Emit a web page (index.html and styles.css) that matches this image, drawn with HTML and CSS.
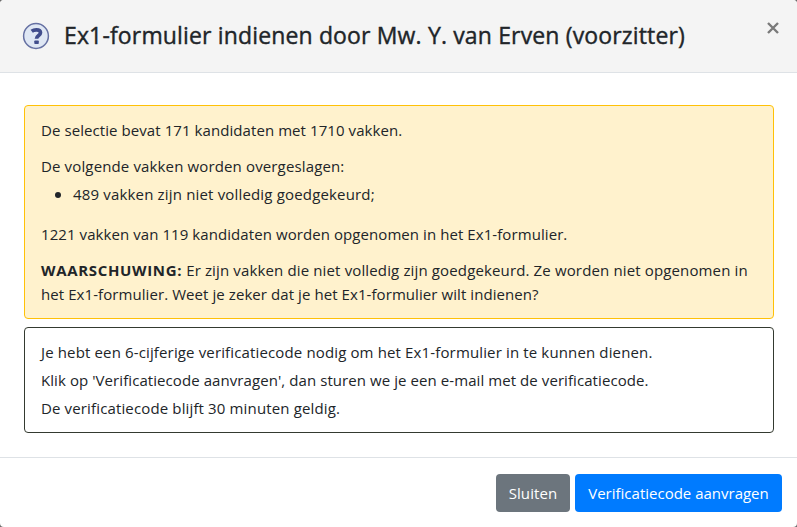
FILE: index.html
```html
<!DOCTYPE html>
<html lang="nl">
<head>
<meta charset="utf-8">
<title>Ex1-formulier indienen</title>
<link rel="stylesheet" href="styles.css">
</head>
<body>
<div class="modal" role="dialog" aria-labelledby="title">
  <header class="modal-header">
    <svg class="help-icon" viewBox="0 0 28 28" aria-hidden="true">
      <circle cx="14" cy="14" r="12.4" fill="#dfe7f4" stroke="#6570a2" stroke-width="1.5"/>
      <path d="M9.7 9.2C11 8.2 12.5 7.8 14.4 7.8c2.6 0 4.1 1.1 4.1 3 0 2.7-4 2.8-4 6" fill="none" stroke="#414d8c" stroke-width="3.7"/>
      <rect x="12.3" y="18.5" width="4.5" height="3.5" rx=".7" fill="#414d8c"/>
    </svg>
    <h1 class="modal-title" id="title">Ex1-formulier indienen door Mw. Y. van Erven (voorzitter)</h1>
    <button class="close" type="button" aria-label="Sluiten"><svg viewBox="0 0 12 12"><path d="M1 1l10 10M11 1L1 11"/></svg></button>
  </header>
  <main class="modal-body">
    <section class="notice warning">
      <p class="snug">De selectie bevat 171 kandidaten met 1710 vakken.</p>
      <p class="intro">De volgende vakken worden overgeslagen:</p>
      <ul><li>489 vakken zijn niet volledig goedgekeurd;</li></ul>
      <p class="snug">1221 vakken van 119 kandidaten worden opgenomen in het Ex1-formulier.</p>
      <p><strong>WAARSCHUWING:</strong> Er zijn vakken die niet volledig zijn goedgekeurd. Ze worden niet opgenomen in<br><span class="snug">het Ex1-formulier. Weet je zeker dat je het Ex1-formulier wilt indienen?</span></p>
    </section>
    <section class="notice info">
      <p>Je hebt een 6-cijferige verificatiecode nodig om het Ex1-formulier in te kunnen dienen.</p>
      <p class="snug">Klik op 'Verificatiecode aanvragen', dan sturen we je een e-mail met de verificatiecode.</p>
      <p>De verificatiecode blijft 30 minuten geldig.</p>
    </section>
  </main>
  <footer class="modal-footer">
    <button class="btn secondary" type="button">Sluiten</button>
    <button class="btn primary" type="button">Verificatiecode aanvragen</button>
  </footer>
</div>
</body>
</html>
```
FILE: styles.css
```css
* { box-sizing: border-box; }
body {
  margin: 0;
  background: #6b6b6b;
  color: #212529;
  font: 15px/24px "Segoe UI", "Open Sans", "Noto Sans", sans-serif;
}
.modal {
  display: flex;
  flex-direction: column;
  height: 527px;
  background: #fff;
  border-radius: 4px;
  overflow: hidden;
}
.modal-header {
  display: flex;
  align-items: flex-start;
  height: 73px;
  padding: 18px 17px 0 22px;
  background: #f4f4f4;
  border-bottom: 1px solid #dee2e6;
}
.help-icon { width: 28px; height: 28px; margin: 4px 14px 0 0; }
.modal-title {
  margin: 0;
  font-size: 23px;
  line-height: 34px;
  font-weight: 500;
  letter-spacing: .15px;
  white-space: nowrap;
  -webkit-text-stroke: .4px #212529;
}
.close { margin: 4px 0 0 auto; padding: 0; width: 13px; height: 12px; border: 0; background: none; }
.close svg { display: block; width: 12px; height: 12px; }
.close path { stroke: #7a7a7a; stroke-width: 2.4; fill: none; }
.modal-body { height: 384px; padding: 32px 23px 0 24px; }
.notice {
  padding: 12px 16px 0;
  border: 1px solid;
  border-radius: 4px;
  letter-spacing: .14px;
  white-space: nowrap;
}
.notice p { margin: 0 0 12px; }
.notice .snug { letter-spacing: .075px; }
.notice strong { letter-spacing: .66px; }
.warning { height: 214px; background: #fff2cd; border-color: #ffc107; }
.warning .intro { margin-bottom: 4px; }
.warning ul { margin: 0 0 16px; padding: 0 0 0 14px; list-style: none; }
.warning li { display: flex; align-items: center; gap: 12px; letter-spacing: .17px; }
.warning li::before { content: ""; width: 6px; height: 6px; margin-top: 2px; border-radius: 50%; background: #212529; }
.info { height: 106px; margin-top: 8px; border-color: #343a30; }
.info p { margin-bottom: 4px; }
.modal-footer {
  display: flex;
  justify-content: flex-end;
  gap: 5px;
  height: 70px;
  padding: 16px 15px 0;
  border-top: 1px solid #dee2e6;
}
.btn { height: 38px; padding: 0; border: 0; border-radius: 4px; color: #fff; font: inherit; }
.secondary { width: 74px; background: #6c757d; letter-spacing: .1px; }
.primary { width: 207px; background: #007bff; }
```
